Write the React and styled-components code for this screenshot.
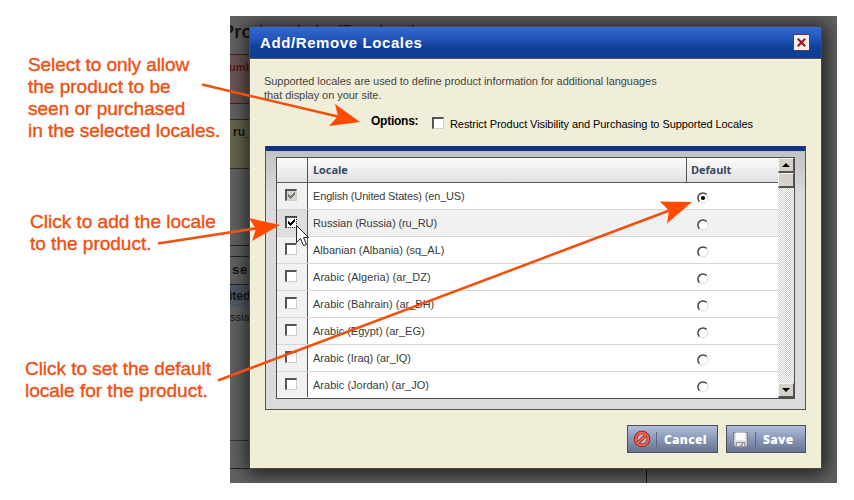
import React from 'react';
import styled, { createGlobalStyle } from 'styled-components';

const GlobalStyle = createGlobalStyle`
  * { box-sizing: border-box; }
  body { margin: 0; background: #fff; overflow: hidden; font-family: "Liberation Sans", Arial, sans-serif; }
`;

const Page = styled.main`
  position: relative;
  width: 854px;
  height: 500px;
  padding: 16px 17px 17px 230px;
  background: #fff;
`;

const Backdrop = styled.section`
  position: relative;
  height: 467px;
  padding: 10px 15px 14px 19px;
  overflow: hidden;
  background: #626262;
`;

const DimmedPage = styled.div`
  position: absolute;
  top: 0;
  bottom: 0;
  left: 0;
  width: 417px;
  display: flex;
  flex-direction: column;
  color: #1c1c1c;
  white-space: nowrap;
`;

const Band = styled.div`
  flex: 0 0 ${p => p.$h}px;
  height: ${p => p.$h}px;
  background: ${p => p.$bg || 'transparent'};
  border-top: ${p => (p.$line ? `1px solid ${p.$line}` : '0')};
  border-bottom: ${p => (p.$end ? `1px solid ${p.$end}` : '0')};
  padding: ${p => p.$pad || '0'};
  color: ${p => p.$color || '#161616'};
  font-size: ${p => p.$size || 12}px;
  font-weight: ${p => (p.$regular ? 400 : 700)};
  letter-spacing: ${p => p.$track || 0}px;
  line-height: 1.15;
  overflow: hidden;
`;

const Shift = styled.span`
  display: inline-block;
  margin-left: ${p => p.$x}px;
`;

const FooterBand = styled.div`
  height: 15px;
  border-top: 1px solid #242424;
  border-right: 1px solid #1c1c1c;
`;

const Dialog = styled.div`
  position: relative;
  display: flex;
  flex-direction: column;
  height: 443px;
  background: #f0eed8;
  border: 1px solid #4c4a3e;
  box-shadow: 1px 2px 18px 3px rgba(0, 0, 0, 0.72);
`;

const TitleBar = styled.header`
  display: flex;
  align-items: center;
  justify-content: space-between;
  height: 32px;
  padding: 0 11px 0 10px;
  background: linear-gradient(#3468d2 0, #2558bd 35%, #11409b 62%, #103c93 100%);
  border-bottom: 1px solid #55564c;
`;

const Title = styled.h1`
  margin: 0;
  color: #fff;
  font-size: 15px;
  line-height: 20px;
  letter-spacing: 0.6px;
`;

const CloseButton = styled.button`
  display: grid;
  place-items: center;
  width: 17px;
  height: 17px;
  padding: 0;
  background: #f1f0ee;
  border: 1px solid #5a3f45;
`;

const Body = styled.div`
  display: flex;
  flex-direction: column;
  padding: 15px 15px 0;
`;

const Description = styled.p`
  height: 40px;
  margin: 0 0 0 -1px;
  color: #45443e;
  font-size: 11px;
  line-height: 14px;
  letter-spacing: -0.045px;
  white-space: nowrap;
`;

const Options = styled.div`
  display: flex;
  align-items: center;
  height: 18px;
  padding-left: 106px;
  margin-bottom: 14px;
  color: #000;
  font-size: 11px;
  white-space: nowrap;
`;

const OptionsLabel = styled.span`
  width: 61px;
  font-size: 12px;
  font-weight: 700;
  line-height: 14px;
  letter-spacing: -0.25px;
  padding-bottom: 4px;
`;

const OptionsText = styled.span`
  margin-left: 6px;
  letter-spacing: -0.07px;
  line-height: 14px;
  padding-top: 2px;
`;

const Panel = styled.div`
  height: 264px;
  padding: 6px 10px 10px;
  background: linear-gradient(#c2c2c4 0, #dbdbdd 45px);
  border: 1px solid #55554f;
  border-top: 5px solid #12357f;
`;

const TableFrame = styled.div`
  display: flex;
  height: 242px;
  border: 1px solid #4e4e4e;
  background: #fff;
`;

const Table = styled.div`
  width: 501px;
`;

const Row = styled.div`
  display: grid;
  grid-template-columns: 31px 379px 91px;
  height: ${p => (p.$last ? 25 : 27)}px;
  background: ${p => (p.$selected ? '#f1f1f1' : '#fff')};
  border-bottom: ${p => (p.$last ? 0 : '1px solid #d6d6d6')};
`;

const CheckCell = styled.div`
  background: ${p => (p.$selected ? '#dedede' : '#f1f1f1')};
  border-right: 1px solid #555;
  padding: 6px 0 0 8px;
`;

const NameCell = styled.div`
  padding: 6px 0 0 5px;
  color: #3b3b3b;
  font-size: 11px;
  line-height: 15px;
  letter-spacing: ${p => p.$track}px;
  white-space: nowrap;
`;

const RadioCell = styled.div`
  padding: 9px 0 0 10px;
`;

const HeadRow = styled.div`
  display: grid;
  grid-template-columns: 31px 379px 91px;
  height: 25px;
  background: linear-gradient(#fbfbfb, #e1e1e3);
  border-bottom: 1px solid #5a5a5a;
`;

const HeadCell = styled.div`
  padding-left: ${p => (p.$last ? 4 : 5)}px;
  border-right: ${p => (p.$last ? 0 : '1px solid #555')};
  color: #34495e;
  font-family: "Open Sans", "Liberation Sans", sans-serif;
  font-size: 11px;
  font-weight: 700;
  letter-spacing: -0.1px;
  line-height: 24px;
`;

const CheckFrame = styled.span`
  display: grid;
  place-items: center;
  width: 12px;
  height: 12px;
  background: ${p => (p.$disabled ? '#d6d3ce' : '#fff')};
  border: 1px solid #d0cec8;
  border-top: 2px solid #555;
  border-left: 2px solid #555;
  outline: ${p => (p.$focus ? '1px dotted #333' : 'none')};
  outline-offset: -1px;
`;

const ScrollBar = styled.div`
  display: flex;
  flex-direction: column;
  width: 16px;
  background: repeating-conic-gradient(#cfccc6 0 25%, #fff 0 50%) 0 0 / 2px 2px;
`;

const ScrollButton = styled.div`
  display: grid;
  place-items: center;
  height: 15px;
  background: #d5d1ca;
  border: 1px solid #f5f4f1;
  border-right: 1px solid #55534f;
  border-bottom: 2px solid #55534f;
  margin-top: ${p => (p.$end ? 'auto' : '0')};
`;

const Actions = styled.footer`
  display: flex;
  justify-content: flex-end;
  gap: 8px;
  padding-top: 15px;
`;

const ActionButton = styled.button`
  display: flex;
  align-items: center;
  width: ${p => p.$w}px;
  height: 28px;
  padding: 0 0 0 5px;
  color: #fff;
  background: linear-gradient(#b1bdda 0, #8c9abb 45%, #67738f 100%);
  border: 1px solid #4e5158;
  font: 800 12px "Open Sans", "Liberation Sans", sans-serif;
  letter-spacing: ${p => p.$track}px;
`;

const ButtonRule = styled.span`
  width: 1px;
  height: 15px;
  margin: 0 7px 0 ${p => p.$left}px;
  background: #5e6780;
`;

const Callout = styled.p`
  position: absolute;
  left: ${p => p.$x}px;
  top: ${p => p.$y}px;
  margin: 0;
  color: #ef5114;
  -webkit-text-stroke: 0.4px #ef5114;
  font-size: 19px;
  line-height: 22px;
  white-space: nowrap;
`;

const CalloutLine = styled.span`
  display: block;
  letter-spacing: ${p => p.$track || 0}px;
`;

const Overlay = styled.svg`
  position: absolute;
  inset: 0;
`;

function Check({ color }) {
  return (
    <svg width="9" height="9" viewBox="0 0 9 9" shapeRendering="crispEdges">
      <path d="M1 3h1v1h1v1h1v-1h1v-1h1v-1h1v-1h1v3h-1v1h-1v1h-1v1h-1v1h-1v-1h-1v-1h-1z" fill={color} />
    </svg>
  );
}

function Checkbox({ checked, disabled, focus }) {
  return (
    <CheckFrame $disabled={disabled} $focus={focus}>
      {checked && <Check color={disabled ? '#777' : '#000'} />}
    </CheckFrame>
  );
}

function Radio({ checked }) {
  return (
    <svg width="12" height="12" viewBox="0 0 12 12" display="block">
      <circle cx="6" cy="6" r="5" fill="#fff" stroke="#dcdad5" />
      <path d="M2.4 9.6A5 5 0 0 1 9.6 2.4" fill="none" stroke="#484848" strokeWidth="1.5" />
      {checked && <circle cx="6" cy="6" r="2.1" fill="#000" />}
    </svg>
  );
}

function CancelIcon() {
  return (
    <svg width="18" height="18" viewBox="0 0 18 18">
      <circle cx="9" cy="9" r="8.2" fill="#7d1d1d" />
      <circle cx="9" cy="9" r="7.4" fill="#f4604c" />
      <circle cx="9" cy="9" r="5.3" fill="#7d1d1d" />
      <circle cx="9" cy="9" r="4.7" fill="#bfb6c2" />
      <path d="M5.4 12.600l7.200-7.200" stroke="#7d1d1d" strokeWidth="3.200" />
      <path d="M4.800 13.200l8.400-8.400" stroke="#f4604c" strokeWidth="2" />
    </svg>
  );
}

function SaveIcon() {
  return (
    <svg width="17" height="17" viewBox="0 0 17 17">
      <path d="M1.5 1.5h14v14h-12l-2-2z" fill="#c9c9c9" stroke="#808083" />
      <path d="M3.5 1.5h10v8h-10z" fill="#fafafa" />
      <path d="M2 10h13" stroke="#ececec" />
      <path d="M4.5 11.5h8v4h-8z" fill="#e9e9e9" stroke="#9a9a9c" />
      <path d="M7 15l3-3h2l-2 3z" fill="#a5a5a5" />
    </svg>
  );
}

const locales = [
  { name: 'English (United States) (en_US)', track: -0.16, checked: true, disabled: true, isDefault: true },
  { name: 'Russian (Russia) (ru_RU)', track: -0.08, checked: true, selected: true },
  { name: 'Albanian (Albania) (sq_AL)', track: 0 },
  { name: 'Arabic (Algeria) (ar_DZ)', track: 0.04 },
  { name: 'Arabic (Bahrain) (ar_BH)', track: 0.01 },
  { name: 'Arabic (Egypt) (ar_EG)', track: -0.01 },
  { name: 'Arabic (Iraq) (ar_IQ)', track: -0.02 },
  { name: 'Arabic (Jordan) (ar_JO)', track: 0.02 },
];

function LocaleTable() {
  return (
    <TableFrame>
      <Table>
        <HeadRow>
          <HeadCell />
          <HeadCell>Locale</HeadCell>
          <HeadCell $last>Default</HeadCell>
        </HeadRow>
        {locales.map((l, i) => (
          <Row key={l.name} $selected={l.selected} $last={i === locales.length - 1}>
            <CheckCell $selected={l.selected}>
              <Checkbox checked={l.checked} disabled={l.disabled} focus={l.selected} />
            </CheckCell>
            <NameCell $track={l.track}>{l.name}</NameCell>
            <RadioCell><Radio checked={l.isDefault} /></RadioCell>
          </Row>
        ))}
      </Table>
      <ScrollBar>
        <ScrollButton>
          <svg width="8" height="4"><path d="M0 4l4-4 4 4z" /></svg>
        </ScrollButton>
        <ScrollButton />
        <ScrollButton $end>
          <svg width="8" height="4"><path d="M0 0h8l-4 4z" /></svg>
        </ScrollButton>
      </ScrollBar>
    </TableFrame>
  );
}

export default function App() {
  return (
    <Page>
      <GlobalStyle />
      <Backdrop>
        <DimmedPage>
          <Band $h={38} $pad="6px 0 0" $size={18} $track={0.2}><Shift $x={-8}>Product Info (Product)</Shift></Band>
          <Band $h={50} $bg="#6a5555" $line="#4f1c1c" $end="#4f1c1c" $pad="6px 0 0" $color="#5c1919" $size={11}><Shift $x={-1}>umber</Shift></Band>
          <Band $h={15} />
          <Band $h={50} $bg="#67664c" $line="#2c2c20" $end="#2c2c20" $pad="6px 0 0 3px">ru_RU</Band>
          <Band $h={76} />
          <Band $h={11} $line="#242424" />
          <Band $h={28} $line="#242424" $pad="6px 0 0 2px" $size={13} $track={0.8}>se</Band>
          <Band $h={23} $bg="#525b69" $line="#1f2226" $pad="5px 0 0"><Shift $x={-1}>ited</Shift></Band>
          <Band $h={133} $regular $size={11} $pad="4px 0 0">ssian</Band>
          <Band $h={28} $line="#333" />
          <FooterBand />
        </DimmedPage>
        <Dialog>
          <TitleBar>
            <Title>Add/Remove Locales</Title>
            <CloseButton aria-label="Close">
              <svg width="9" height="9" viewBox="0 0 9 9"><path d="M.8.8l7.4 7.4M8.2.8L.8 8.2" stroke="#99151f" strokeWidth="2.1" /></svg>
            </CloseButton>
          </TitleBar>
          <Body>
            <Description>
              Supported locales are used to define product information for additional languages<br />
              that display on your site.
            </Description>
            <Options>
              <OptionsLabel>Options:</OptionsLabel>
              <Checkbox />
              <OptionsText>Restrict Product Visibility and Purchasing to Supported Locales</OptionsText>
            </Options>
            <Panel><LocaleTable /></Panel>
            <Actions>
              <ActionButton $w={91} $track={0.3}><CancelIcon /><ButtonRule $left={5} />Cancel</ActionButton>
              <ActionButton $w={80} $track={0.3}><SaveIcon /><ButtonRule $left={6} />Save</ActionButton>
            </Actions>
          </Body>
        </Dialog>
      </Backdrop>
      <Callout $x={28} $y={54}>
        <CalloutLine $track={-0.08}>Select to only allow</CalloutLine>
        <CalloutLine>the product to be</CalloutLine>
        <CalloutLine>seen or purchased</CalloutLine>
        <CalloutLine>in the selected locales.</CalloutLine>
      </Callout>
      <Callout $x={30} $y={211}>
        <CalloutLine>Click to add the locale</CalloutLine>
        <CalloutLine>to the product.</CalloutLine>
      </Callout>
      <Callout $x={25} $y={358}>
        <CalloutLine $track={-0.04}>Click to set the default</CalloutLine>
        <CalloutLine>locale for the product.</CalloutLine>
      </Callout>
      <Overlay width="854" height="500" viewBox="0 0 854 500">
        <g stroke="#f2500f" strokeWidth="2.6" fill="none">
          <path d="M202 84.500L340 117" />
          <path d="M158 243.500L258 228" />
          <path d="M218 380.500L672 209.500" />
        </g>
        <g fill="#ff4a00">
          <path d="M360 122l-25-18 3 12-9 10z" />
          <path d="M280 225l-31-7 7 11-4 12z" />
          <path d="M692 202l-32-.5 9 9-2 13z" />
        </g>
        <path d="M296.500 225.500v17l4-4 3 7 3-1-3-7h5z" fill="#fff" stroke="#222" />
      </Overlay>
    </Page>
  );
}
